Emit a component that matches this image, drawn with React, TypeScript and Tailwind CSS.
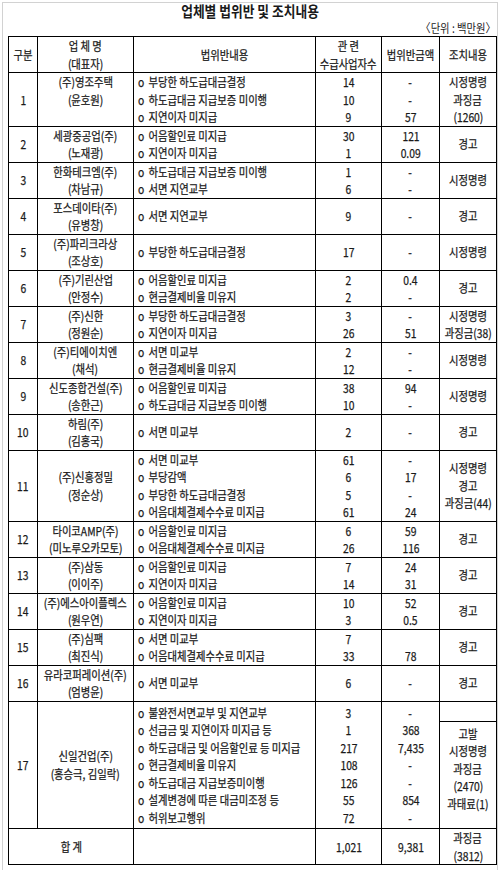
import type { ReactNode } from 'react';

interface Item {
  text: string;
  count: string;
  amount: string;
}

interface Row {
  no: string;
  name: string[];
  items: Item[];
  action: string[];
  nameTop?: boolean;
}

const rows: Row[] = [
  {
    no: '1',
    name: ['(주)영조주택', '(윤호원)'],
    nameTop: true,
    items: [
      { text: '부당한 하도급대금결정', count: '14', amount: '-' },
      { text: '하도급대금 지급보증 미이행', count: '10', amount: '-' },
      { text: '지연이자 미지급', count: '9', amount: '57' },
    ],
    action: ['시정명령', '과징금', '(1260)'],
  },
  {
    no: '2',
    name: ['세광중공업(주)', '(노재광)'],
    items: [
      { text: '어음할인료 미지급', count: '30', amount: '121' },
      { text: '지연이자 미지급', count: '1', amount: '0.09' },
    ],
    action: ['경고'],
  },
  {
    no: '3',
    name: ['한화테크엠(주)', '(차남규)'],
    items: [
      { text: '하도급대금 지급보증 미이행', count: '1', amount: '-' },
      { text: '서면 지연교부', count: '6', amount: '-' },
    ],
    action: ['시정명령'],
  },
  {
    no: '4',
    name: ['포스데이타(주)', '(유병창)'],
    items: [{ text: '서면 지연교부', count: '9', amount: '-' }],
    action: ['경고'],
  },
  {
    no: '5',
    name: ['(주)파리크라상', '(조상호)'],
    items: [{ text: '부당한 하도급대금결정', count: '17', amount: '-' }],
    action: ['시정명령'],
  },
  {
    no: '6',
    name: ['(주)기린산업', '(안정수)'],
    items: [
      { text: '어음할인료 미지급', count: '2', amount: '0.4' },
      { text: '현금결제비율 미유지', count: '2', amount: '-' },
    ],
    action: ['경고'],
  },
  {
    no: '7',
    name: ['(주)신한', '(정원순)'],
    items: [
      { text: '부당한 하도급대금결정', count: '3', amount: '-' },
      { text: '지연이자 미지급', count: '26', amount: '51' },
    ],
    action: ['시정명령', '과징금(38)'],
  },
  {
    no: '8',
    name: ['(주)티에이치엔', '(채석)'],
    items: [
      { text: '서면 미교부', count: '2', amount: '-' },
      { text: '현금결제비율 미유지', count: '12', amount: '-' },
    ],
    action: ['시정명령'],
  },
  {
    no: '9',
    name: ['신도종합건설(주)', '(송한근)'],
    items: [
      { text: '어음할인료 미지급', count: '38', amount: '94' },
      { text: '하도급대금 지급보증 미이행', count: '10', amount: '-' },
    ],
    action: ['시정명령'],
  },
  {
    no: '10',
    name: ['하림(주)', '(김홍국)'],
    items: [{ text: '서면 미교부', count: '2', amount: '-' }],
    action: ['경고'],
  },
  {
    no: '11',
    name: ['(주)신흥정밀', '(정순상)'],
    items: [
      { text: '서면 미교부', count: '61', amount: '-' },
      { text: '부당감액', count: '6', amount: '17' },
      { text: '부당한 하도급대금결정', count: '5', amount: '-' },
      { text: '어음대체결제수수료 미지급', count: '61', amount: '24' },
    ],
    action: ['시정명령', '경고', '과징금(44)'],
  },
  {
    no: '12',
    name: ['타이코AMP(주)', '(미노루오카모토)'],
    items: [
      { text: '어음할인료 미지급', count: '6', amount: '59' },
      { text: '어음대체결제수수료 미지급', count: '26', amount: '116' },
    ],
    action: ['경고'],
  },
  {
    no: '13',
    name: ['(주)삼동', '(이이주)'],
    items: [
      { text: '어음할인료 미지급', count: '7', amount: '24' },
      { text: '지연이자 미지급', count: '14', amount: '31' },
    ],
    action: ['경고'],
  },
  {
    no: '14',
    name: ['(주)에스아이플렉스', '(원우연)'],
    items: [
      { text: '어음할인료 미지급', count: '10', amount: '52' },
      { text: '지연이자 미지급', count: '3', amount: '0.5' },
    ],
    action: ['경고'],
  },
  {
    no: '15',
    name: ['(주)심팩', '(최진식)'],
    items: [
      { text: '서면 미교부', count: '7', amount: '' },
      { text: '어음대체결제수수료 미지급', count: '33', amount: '78' },
    ],
    action: ['경고'],
  },
  {
    no: '16',
    name: ['유라코퍼레이션(주)', '(엄병윤)'],
    items: [{ text: '서면 미교부', count: '6', amount: '-' }],
    action: ['경고'],
  },
];

const lastItems: Item[] = [
  { text: '불완전서면교부 및 지연교부', count: '3', amount: '-' },
  { text: '선급금 및 지연이자 미지급 등', count: '1', amount: '368' },
  { text: '하도급대금 및 어음할인료 등 미지급', count: '217', amount: '7,435' },
  { text: '현금결제비율 미유지', count: '108', amount: '-' },
  { text: '하도급대금 지급보증미이행', count: '126', amount: '-' },
  { text: '설계변경에 따른 대금미조정 등', count: '55', amount: '854' },
  { text: '허위보고행위', count: '72', amount: '-' },
];

// narrow text, the source uses a condensed gulim-like face
function S({ children, left }: { children: ReactNode; left?: boolean }) {
  return (
    <span
      className={`inline-block whitespace-nowrap leading-[17.5px] scale-x-[0.86] [-webkit-text-stroke:0.25px_#1a1a1a] ${left ? 'origin-left' : 'origin-center'}`}
    >
      {children}
    </span>
  );
}

function Lines({ lines }: { lines: string[] }) {
  return (
    <div className="flex flex-col">
      {lines.map((l, i) => (
        <div key={i} className="flex h-[17.5px] items-center justify-center">
          <S>{l}</S>
        </div>
      ))}
    </div>
  );
}

function ItemLines({ items }: { items: Item[] }) {
  return (
    <div className="flex flex-col pl-[4px]">
      {items.map((it, i) => (
        <div key={i} className="flex h-[17.5px] items-center">
          <S left>
            <span>o</span>
            <span className="ml-[5px]">{it.text}</span>
          </S>
        </div>
      ))}
    </div>
  );
}

const td = 'border border-black p-0 align-middle';

export default function App() {
  return (
    <div
      className="w-[500px] h-[883px] bg-white px-[2px] pt-[2px] text-[12px] leading-[17.5px] text-[#1a1a1a]"
      style={{ fontFamily: '"Noto Sans CJK KR", "Noto Sans", sans-serif' }}
    >
      <div className="h-[868px] border-l border-t border-r border-[#d2d2d2]">
        <div className="flex h-[16px] items-center justify-center">
          <span className="inline-block whitespace-nowrap scale-x-[0.85] text-[15px] font-bold leading-[16px]">
            업체별 법위반 및 조치내용
          </span>
        </div>
        <div className="flex h-[17px] items-center justify-end pr-[1px]">
          <span className="inline-block whitespace-nowrap scale-x-[0.86] origin-right text-[12px] leading-[17px]">
            〈단위 : 백만원〉
          </span>
        </div>

        <table className="ml-[5px] w-[488px] table-fixed border-collapse">
          <colgroup>
            <col className="w-[29px]" />
            <col className="w-[96px]" />
            <col className="w-[182px]" />
            <col className="w-[66px]" />
            <col className="w-[58px]" />
            <col className="w-[57px]" />
          </colgroup>
          <thead>
            <tr className="h-[36px]">
              <th className={`${td} font-normal`}><Lines lines={['구분']} /></th>
              <th className={`${td} font-normal`}><Lines lines={['업 체 명', '(대표자)']} /></th>
              <th className={`${td} font-normal`}><Lines lines={['법위반내용']} /></th>
              <th className={`${td} font-normal`}><Lines lines={['관 련', '수급사업자수']} /></th>
              <th className={`${td} font-normal`}><Lines lines={['법위반금액']} /></th>
              <th className={`${td} font-normal`}><Lines lines={['조치내용']} /></th>
            </tr>
          </thead>
          <tbody>
            {rows.map((r) => (
              <tr key={r.no}>
                <td className={td}><Lines lines={[r.no]} /></td>
                <td className={`${td} ${r.nameTop ? '!align-top' : ''}`}><Lines lines={r.name} /></td>
                <td className={td}><ItemLines items={r.items} /></td>
                <td className={td}><Lines lines={r.items.map((i) => i.count)} /></td>
                <td className={td}><Lines lines={r.items.map((i) => i.amount)} /></td>
                <td className={td}><Lines lines={r.action} /></td>
              </tr>
            ))}
            <tr>
              <td className={td}><Lines lines={['17']} /></td>
              <td className={td}><Lines lines={['신일건업(주)', '(홍승극, 김일락)']} /></td>
              <td className={`${td} py-[2px]`}><ItemLines items={lastItems} /></td>
              <td className={`${td} py-[2px]`}><Lines lines={lastItems.map((i) => i.count)} /></td>
              <td className={`${td} py-[2px]`}><Lines lines={lastItems.map((i) => i.amount)} /></td>
              <td className={`${td} !align-top`}>
                <div className="h-[20px] border-b border-black" />
                <div className="pt-[3px]">
                  <Lines lines={['고발', '시정명령', '과징금', '(2470)', '과태료(1)']} />
                </div>
              </td>
            </tr>
            <tr className="h-[36px]">
              <td className={td} colSpan={2}><Lines lines={['합 계']} /></td>
              <td className={td} />
              <td className={td}><Lines lines={['1,021']} /></td>
              <td className={td}><Lines lines={['9,381']} /></td>
              <td className={td}><Lines lines={['과징금', '(3812)']} /></td>
            </tr>
          </tbody>
        </table>
      </div>
    </div>
  );
}
